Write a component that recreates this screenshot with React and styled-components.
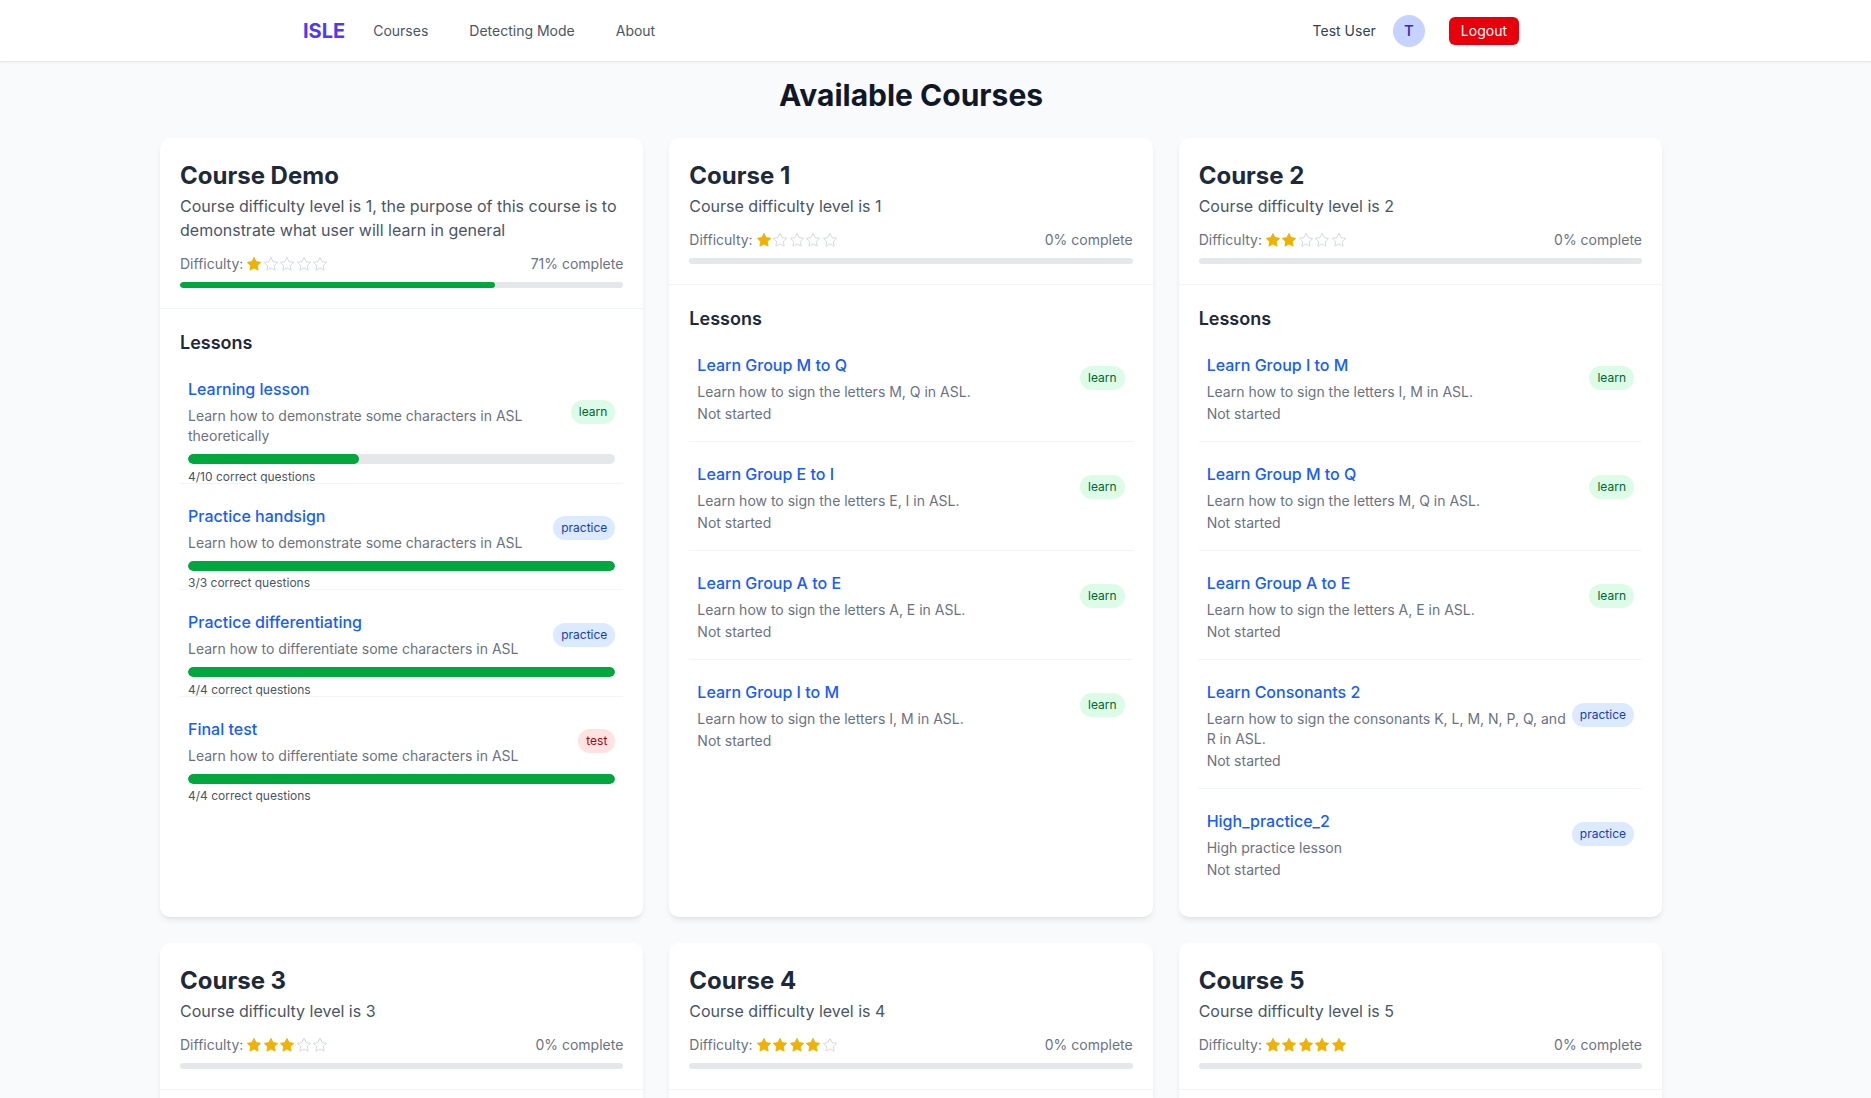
import React from 'react';
import styled, { createGlobalStyle } from 'styled-components';

const courses = [
    {
        title: 'Course Demo',
        desc: 'Course difficulty level is 1, the purpose of this course is to demonstrate what user will learn in general',
        level: 1,
        complete: 71,
        lessons: [
            { title: 'Learning lesson', desc: 'Learn how to demonstrate some characters in ASL theoretically', type: 'learn', correct: 4, total: 10 },
            { title: 'Practice handsign', desc: 'Learn how to demonstrate some characters in ASL', type: 'practice', correct: 3, total: 3 },
            { title: 'Practice differentiating', desc: 'Learn how to differentiate some characters in ASL', type: 'practice', correct: 4, total: 4 },
            { title: 'Final test', desc: 'Learn how to differentiate some characters in ASL', type: 'test', correct: 4, total: 4 },
        ],
    },
    {
        title: 'Course 1',
        desc: 'Course difficulty level is 1',
        level: 1,
        complete: 0,
        lessons: [
            { title: 'Learn Group M to Q', desc: 'Learn how to sign the letters M, Q in ASL.', type: 'learn' },
            { title: 'Learn Group E to I', desc: 'Learn how to sign the letters E, I in ASL.', type: 'learn' },
            { title: 'Learn Group A to E', desc: 'Learn how to sign the letters A, E in ASL.', type: 'learn' },
            { title: 'Learn Group I to M', desc: 'Learn how to sign the letters I, M in ASL.', type: 'learn' },
        ],
    },
    {
        title: 'Course 2',
        desc: 'Course difficulty level is 2',
        level: 2,
        complete: 0,
        lessons: [
            { title: 'Learn Group I to M', desc: 'Learn how to sign the letters I, M in ASL.', type: 'learn' },
            { title: 'Learn Group M to Q', desc: 'Learn how to sign the letters M, Q in ASL.', type: 'learn' },
            { title: 'Learn Group A to E', desc: 'Learn how to sign the letters A, E in ASL.', type: 'learn' },
            { title: 'Learn Consonants 2', desc: 'Learn how to sign the consonants K, L, M, N, P, Q, and R in ASL.', type: 'practice' },
            { title: 'High_practice_2', desc: 'High practice lesson', type: 'practice' },
        ],
    },
    {
        title: 'Course 3',
        desc: 'Course difficulty level is 3',
        level: 3,
        complete: 0,
        lessons: [
            { title: 'Learn Group A to E', desc: 'Learn how to sign the letters A, E in ASL.', type: 'learn' },
            { title: 'Learn Group E to I', desc: 'Learn how to sign the letters E, I in ASL.', type: 'learn' },
        ],
    },
    {
        title: 'Course 4',
        desc: 'Course difficulty level is 4',
        level: 4,
        complete: 0,
        lessons: [
            { title: 'Learn Group M to Q', desc: 'Learn how to sign the letters M, Q in ASL.', type: 'learn' },
            { title: 'High_practice_1', desc: 'High practice lesson', type: 'practice' },
        ],
    },
    {
        title: 'Course 5',
        desc: 'Course difficulty level is 5',
        level: 5,
        complete: 0,
        lessons: [
            { title: 'Learn Group I to M', desc: 'Learn how to sign the letters I, M in ASL.', type: 'learn' },
            { title: 'Final exam', desc: 'Test all the letters in ASL.', type: 'test' },
        ],
    },
];

const badgeColors = {
    learn: { bg: '#dcfce7', fg: '#016630' },
    practice: { bg: '#dbeafe', fg: '#193cb8' },
    test: { bg: '#ffe2e2', fg: '#9f0712' },
};

function Star({ filled }) {
    return (
        <svg width="14" height="14" viewBox="2 2 20 20">
            <path
                d="M12 2.6l2.9 6 6.6.95-4.78 4.65 1.13 6.57L12 17.66l-5.85 3.1 1.13-6.56L2.5 9.55l6.6-.95z"
                fill={filled ? '#f0b100' : 'none'}
                stroke={filled ? '#f0b100' : '#d1d5dc'}
                strokeWidth="1.3"
                strokeLinejoin="round"
            />
        </svg>
    );
}

function Lesson({ lesson }) {
    const hasProgress = lesson.total !== undefined;
    return (
        <LessonItem $tight={hasProgress}>
            <LessonRow>
                <LessonInfo>
                    <LessonTitle>{lesson.title}</LessonTitle>
                    <LessonDesc>{lesson.desc}</LessonDesc>
                </LessonInfo>
                <Badge $type={lesson.type}>{lesson.type}</Badge>
            </LessonRow>
            {hasProgress ? (
                <>
                    <Track $h={10}>
                        <Fill style={{ width: `${(lesson.correct / lesson.total) * 100}%` }} />
                    </Track>
                    <Correct>{lesson.correct}/{lesson.total} correct questions</Correct>
                </>
            ) : (
                <Status>Not started</Status>
            )}
        </LessonItem>
    );
}

function CourseCard({ course }) {
    return (
        <Card>
            <CardHeader>
                <CourseTitle>{course.title}</CourseTitle>
                <CourseDesc>{course.desc}</CourseDesc>
                <MetaRow>
                    <Difficulty>
                        Difficulty:
                        <Stars>
                            {[1, 2, 3, 4, 5].map((n) => (
                                <Star key={n} filled={n <= course.level} />
                            ))}
                        </Stars>
                    </Difficulty>
                    <span>{course.complete}% complete</span>
                </MetaRow>
                <Track $h={6} $mt={8}>
                    <Fill style={{ width: `${course.complete}%` }} />
                </Track>
            </CardHeader>
            <LessonsSection>
                <SectionTitle>Lessons</SectionTitle>
                <LessonList>
                    {course.lessons.map((l, i) => (
                        <Lesson key={i} lesson={l} />
                    ))}
                </LessonList>
            </LessonsSection>
        </Card>
    );
}

export default function App() {
    return (
        <>
            <Global />
            <NavBar>
                <NavInner>
                    <NavLeft>
                        <Logo>ISLE</Logo>
                        <NavLinks>
                            <NavLink>Courses</NavLink>
                            <NavLink>Detecting Mode</NavLink>
                            <NavLink>About</NavLink>
                        </NavLinks>
                    </NavLeft>
                    <NavRight>
                        <UserName>Test User</UserName>
                        <Avatar>T</Avatar>
                        <LogoutButton>Logout</LogoutButton>
                    </NavRight>
                </NavInner>
            </NavBar>
            <Main>
                <PageTitle>Available Courses</PageTitle>
                <Grid>
                    {courses.map((c, i) => (
                        <CourseCard key={i} course={c} />
                    ))}
                </Grid>
            </Main>
        </>
    );
}

const Global = createGlobalStyle`
    html { scrollbar-width: none; }
    html::-webkit-scrollbar { display: none; }
    body {
        margin: 0;
        background: #f9fafb;
        font-family: Inter, 'Noto Sans', sans-serif;
        color: #1e2939;
    }
    * { box-sizing: border-box; }
`;

const NavBar = styled.nav`
    background: #fff;
    border-bottom: 1px solid #e5e7eb;
    box-shadow: 0 1px 2px rgba(0, 0, 0, 0.04);
    padding-right: 49px;
`;
const NavInner = styled.div`
    max-width: 1216px;
    height: 61px;
    margin: 0 auto;
    display: flex;
    align-items: center;
    justify-content: space-between;
`;
const NavLeft = styled.div`
    display: flex;
    align-items: center;
`;
const Logo = styled.div`
    font-size: 20px;
    font-weight: 700;
    color: #4f39f6;
    margin-right: 16px;
`;
const NavLinks = styled.div`
    display: flex;
    gap: 17px;
`;
const NavLink = styled.a`
    padding: 8px 12px;
    font-size: 14px;
    color: #4a5565;
    cursor: pointer;
`;
const NavRight = styled.div`
    display: flex;
    align-items: center;
    gap: 17px;
`;
const UserName = styled.span`
    font-size: 14px;
    color: #364153;
`;
const Avatar = styled.div`
    width: 32px;
    height: 32px;
    border-radius: 50%;
    background: #c6d2ff;
    color: #372aac;
    display: flex;
    align-items: center;
    justify-content: center;
    font-size: 15px;
    font-weight: 500;
`;
const LogoutButton = styled.button`
    margin-left: 7px;
    height: 28px;
    padding: 0 12px;
    border: none;
    border-radius: 6px;
    background: #e7000b;
    color: #fff;
    font-family: inherit;
    font-size: 14px;
    cursor: pointer;
`;

const Main = styled.main`
    padding: 15px 49px 40px 0;
`;
const PageTitle = styled.h1`
    margin: 0 0 25px;
    text-align: center;
    font-size: 30px;
    line-height: 36px;
    font-weight: 700;
    color: #101828;
`;
const Grid = styled.div`
    max-width: 1502px;
    margin: 0 auto;
    display: grid;
    grid-template-columns: repeat(3, 1fr);
    gap: 26px;
`;
const Card = styled.div`
    background: #fff;
    border-radius: 10px;
    box-shadow: 0 4px 6px -1px rgba(0, 0, 0, 0.08), 0 2px 4px -2px rgba(0, 0, 0, 0.06);
    overflow: hidden;
`;
const CardHeader = styled.div`
    padding: 20px;
    border-bottom: 1px solid #f3f4f6;
`;
const CourseTitle = styled.h2`
    margin: 0;
    font-size: 24px;
    line-height: 36px;
    font-weight: 700;
    color: #1e2939;
`;
const CourseDesc = styled.p`
    margin: 0;
    font-size: 16px;
    line-height: 24px;
    color: #4a5565;
`;
const MetaRow = styled.div`
    margin-top: 12px;
    display: flex;
    justify-content: space-between;
    align-items: center;
    font-size: 14px;
    line-height: 20px;
    color: #6a7282;
`;
const Difficulty = styled.div`
    display: flex;
    align-items: center;
`;
const Stars = styled.span`
    display: inline-flex;
    gap: 2.5px;
    margin-left: 4px;
`;
const Track = styled.div`
    height: ${(p) => p.$h}px;
    margin-top: ${(p) => p.$mt || 8}px;
    border-radius: 999px;
    background: #e5e7eb;
    overflow: hidden;
`;
const Fill = styled.div`
    height: 100%;
    border-radius: 999px;
    background: #00a63e;
`;
const LessonsSection = styled.div`
    padding: 20px;
`;
const SectionTitle = styled.h3`
    margin: 0;
    font-size: 18px;
    line-height: 28px;
    font-weight: 600;
    color: #1e2939;
`;
const LessonList = styled.div`
    display: flex;
    flex-direction: column;
`;
const LessonItem = styled.div`
    padding: 20px 8px ${(p) => (p.$tight ? 0 : 17)}px;
    border-bottom: 1px solid #f3f4f6;
    &:last-child {
        border-bottom: none;
    }
`;
const LessonRow = styled.div`
    display: flex;
    align-items: center;
    justify-content: space-between;
    gap: 6px;
`;
const LessonInfo = styled.div`
    flex: 1;
    min-width: 0;
`;
const LessonTitle = styled.a`
    display: block;
    font-size: 16px;
    line-height: 24px;
    font-weight: 500;
    color: #155dfc;
    cursor: pointer;
`;
const LessonDesc = styled.p`
    margin: 5px 0 0;
    font-size: 14px;
    line-height: 20px;
    color: #6a7282;
`;
const Status = styled.div`
    margin-top: 2px;
    font-size: 14px;
    line-height: 20px;
    color: #6a7282;
`;
const Correct = styled.div`
    margin-top: 6.5px;
    font-size: 12px;
    line-height: 12px;
    color: #4a5565;
`;
const Badge = styled.span`
    flex-shrink: 0;
    padding: 4px 8px;
    border-radius: 999px;
    font-size: 12px;
    line-height: 16px;
    background: ${(p) => badgeColors[p.$type].bg};
    color: ${(p) => badgeColors[p.$type].fg};
`;
